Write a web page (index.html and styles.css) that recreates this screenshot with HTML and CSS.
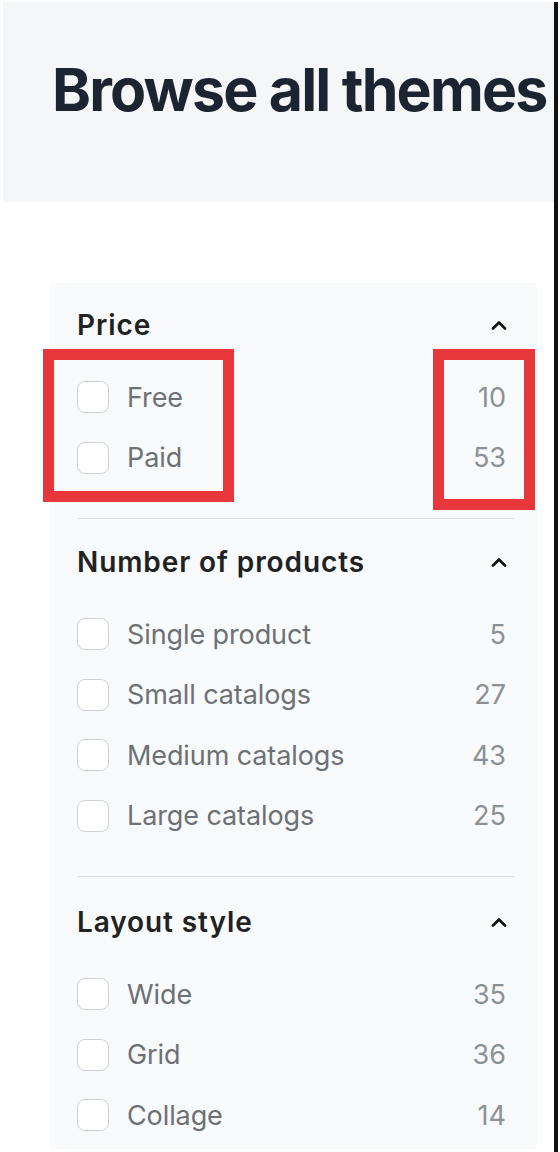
FILE: index.html
```html
<!DOCTYPE html>
<html lang="en">
<head>
    <meta charset="UTF-8">
    <meta name="viewport" content="width=device-width, initial-scale=1.0">
    <title>Browse all themes</title>
    <link rel="stylesheet" href="styles.css">
</head>
<body>
    <div class="page">
        <header class="hero">
            <h1>Browse all themes</h1>
        </header>

        <aside class="filters">
            <section class="group">
                <div class="group-head">
                    <h2>Price</h2>
                    <svg class="chevron" width="16" height="10" viewBox="0 0 16 10"><polyline points="2,8.5 8,2.5 14,8.5" fill="none" stroke="#111" stroke-width="2.6" stroke-linecap="round" stroke-linejoin="round"/></svg>
                </div>
                <label class="option"><span class="box"></span><span class="name">Free</span><span class="count">10</span></label>
                <label class="option"><span class="box"></span><span class="name">Paid</span><span class="count">53</span></label>
            </section>

            <section class="group">
                <div class="group-head">
                    <h2>Number of products</h2>
                    <svg class="chevron" width="16" height="10" viewBox="0 0 16 10"><polyline points="2,8.5 8,2.5 14,8.5" fill="none" stroke="#111" stroke-width="2.6" stroke-linecap="round" stroke-linejoin="round"/></svg>
                </div>
                <label class="option"><span class="box"></span><span class="name">Single product</span><span class="count">5</span></label>
                <label class="option"><span class="box"></span><span class="name">Small catalogs</span><span class="count">27</span></label>
                <label class="option"><span class="box"></span><span class="name">Medium catalogs</span><span class="count">43</span></label>
                <label class="option"><span class="box"></span><span class="name">Large catalogs</span><span class="count">25</span></label>
            </section>

            <section class="group">
                <div class="group-head">
                    <h2>Layout style</h2>
                    <svg class="chevron" width="16" height="10" viewBox="0 0 16 10"><polyline points="2,8.5 8,2.5 14,8.5" fill="none" stroke="#111" stroke-width="2.6" stroke-linecap="round" stroke-linejoin="round"/></svg>
                </div>
                <label class="option"><span class="box"></span><span class="name">Wide</span><span class="count">35</span></label>
                <label class="option"><span class="box"></span><span class="name">Grid</span><span class="count">36</span></label>
                <label class="option"><span class="box"></span><span class="name">Collage</span><span class="count">14</span></label>
            </section>

            <div class="mark mark-names"></div>
            <div class="mark mark-counts"></div>
        </aside>
    </div>
</body>
</html>
```

FILE: styles.css
```css
body {
    margin: 0;
    background-color: #fff;
    font-family: Inter, "Noto Sans", sans-serif;
}
.page {
    width: 558px;
    min-height: 1152px;
    border-right: 4px solid #111;
    box-sizing: border-box;
}
.hero {
    height: 200px;
    margin: 2px 0 0 3px;
    box-sizing: border-box;
    padding: 53px 0 0 49px;
    background-color: #f4f6f8;
}
.hero h1 {
    margin: 0;
    font-size: 59px;
    line-height: 70px;
    font-weight: 700;
    letter-spacing: -1.8px;
    color: #1b2430;
    white-space: nowrap;
}
.filters {
    position: relative;
    width: 487px;
    margin: 81px 0 0 50px;
    box-sizing: border-box;
    padding: 0 31px 2px 27px;
    background-color: #f9fafb;
}
.group {
    padding: 26px 9px 30px 0;
    border-bottom: 1px solid #dfe3e8;
    margin-right: -9px;
}
.group:nth-of-type(2) {
    padding-top: 27px;
}
.group:nth-of-type(3) {
    padding-top: 29px;
    padding-bottom: 1px;
    border-bottom: none;
}
.group-head {
    display: flex;
    justify-content: space-between;
    align-items: center;
    height: 32px;
    margin-bottom: 26px;
}
.group-head h2 {
    margin: 0;
    font-size: 28px;
    font-weight: 600;
    color: #202223;
    letter-spacing: 0.9px;
}
.chevron {
    margin-right: -1px;
}
.option {
    display: flex;
    align-items: center;
    height: 60.5px;
    font-size: 27px;
    color: #6d7175;
}
.box {
    width: 30px;
    height: 30px;
    border: 1.5px solid #cdd1d5;
    border-radius: 8px;
    background-color: #fff;
    margin-right: 18px;
    flex-shrink: 0;
}
.name {
    flex: 1;
    letter-spacing: -0.1px;
}
.count {
    color: #8c9196;
}
.mark {
    position: absolute;
    border: 11px solid #e8373a;
    box-sizing: border-box;
}
.mark-names {
    left: -7px;
    top: 66px;
    width: 191px;
    height: 153px;
}
.mark-counts {
    left: 383px;
    top: 66px;
    width: 102px;
    height: 161px;
}
```
